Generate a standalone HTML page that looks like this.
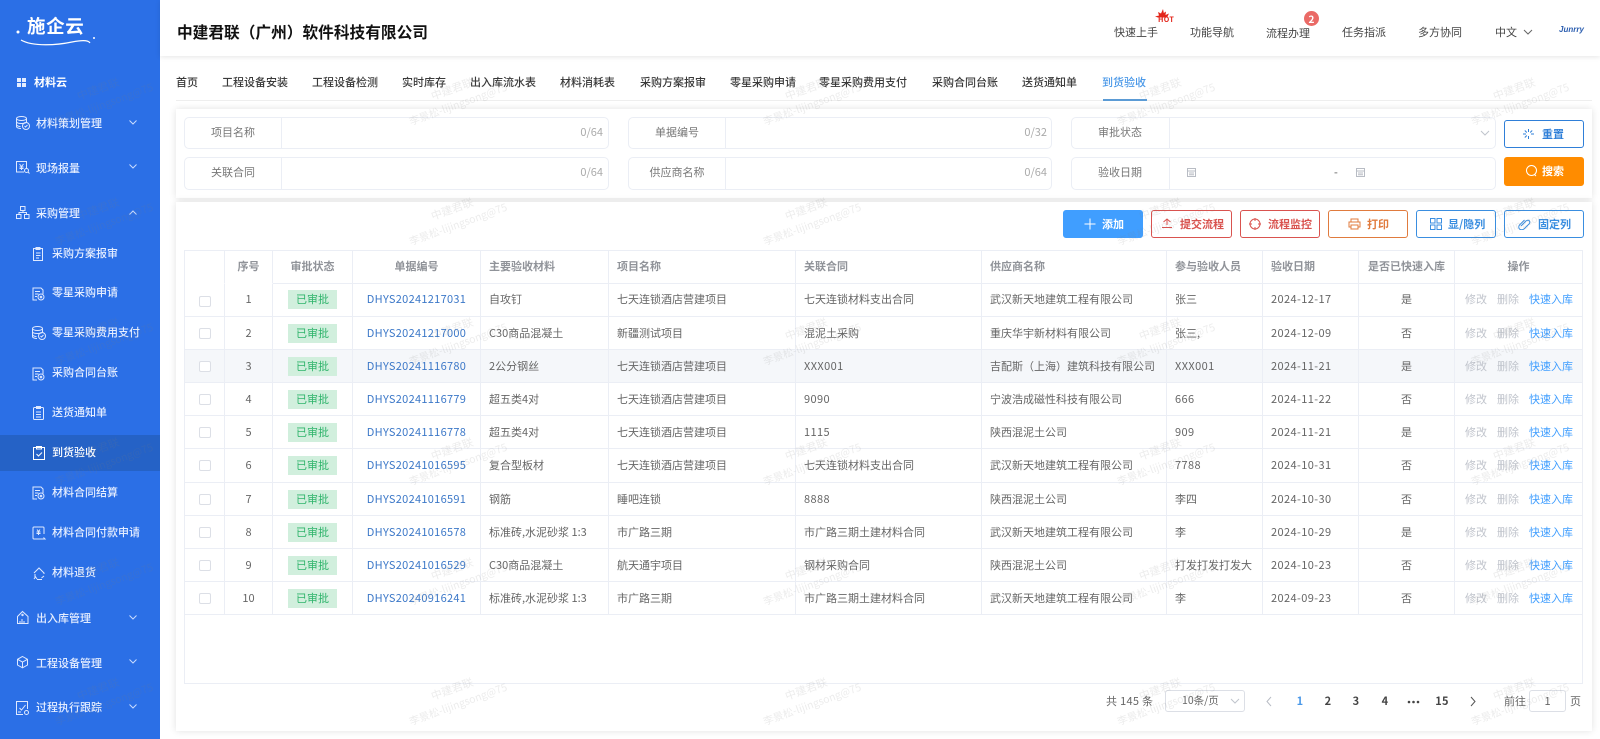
<!DOCTYPE html>
<html lang="zh-CN"><head><meta charset="utf-8"><title>到货验收</title>
<style>
*{box-sizing:border-box}
html,body{margin:0;padding:0;width:1600px;height:739px;overflow:hidden;background:#fff}
body{font-family:"Liberation Sans","Noto Sans CJK SC",sans-serif;font-size:11px;color:#606266;position:relative}
.n,.n *{font-family:"Noto Sans CJK SC","Liberation Sans",sans-serif}
.t{position:absolute;line-height:16px;height:16px;white-space:nowrap}
.c{transform:translateX(-50%)}
#side{position:absolute;left:0;top:0;width:160px;height:739px;background:#2b6fe6}
#side .t{color:#e4edff;font-weight:500}
#act{position:absolute;left:0;top:435px;width:160px;height:36px;background:#2562c6}
#top{position:absolute;left:160px;top:0;width:1440px;height:56px;background:#fff;box-shadow:0 1px 5px rgba(0,0,0,.1)}
.top{color:#444}
.tab{color:#3a3a3a;top:74px;font-weight:500}
.panel{position:absolute;background:#fff;box-shadow:0 0 7px rgba(0,0,0,.12)}
.f{position:absolute;border:1px solid #ebeef5;border-radius:5px;background:#fff}
.d{position:absolute;width:1px;background:#ebeef5}
.lab{color:#777}
.cnt{color:#aaa}
.b{position:absolute;width:80px;height:28px;border:1px solid;border-radius:3px;background:#fff;font-weight:700;font-size:11px;line-height:27px}
.b span{position:absolute;top:0;white-space:nowrap}
.b svg{position:absolute;fill:none;stroke:currentColor;stroke-width:1}
#tb{position:absolute;left:184px;top:250px;width:1399px;height:434px;border:1px solid #ebeef5;background:#fff}
table{border-collapse:separate;border-spacing:0;table-layout:fixed;width:1398px;position:absolute;left:0;top:0}
td,th{height:33px;padding:8px 0 0 8px;vertical-align:top;border-right:1px solid #ebeef5;border-bottom:1px solid #ebeef5;text-align:left;font-size:11px;font-weight:400;color:#666;white-space:nowrap;overflow:hidden;line-height:16px}
th{font-weight:700;color:#909399;padding-top:7px}
th.m,td.m{text-align:center;padding-left:0}
th.nb{border-bottom-color:transparent}
tr.r1 td{padding-top:7px}
tr.r1 .ck{top:5px}
tr.r6 td{height:34px}
tr.h td{background:#f5f7fa}
.ck{display:inline-block;width:12px;height:11px;border:1px solid #dcdfe6;border-radius:2px;background:#fff;position:relative;top:3px;vertical-align:top}
.tag{display:inline-block;width:49px;height:19px;line-height:19px;background:#d1efdd;color:#2fb46b;text-align:center;position:relative;top:-1px;vertical-align:top}
.lnk{color:#3c78c8;letter-spacing:.3px}
.num{letter-spacing:.4px}
.g{color:#c0c4cc;position:absolute;left:10px}
.g2{color:#c0c4cc;position:absolute;left:42px}
.q{color:#409eff;position:absolute;left:74px}
td.o{position:relative;padding:0}
td.o span{top:8px}
tr.r1 td.o{padding:0}
tr.r1 td.o span{top:7px}
.pg{color:#444;font-weight:700;top:693px;letter-spacing:.2px}
#wm{position:absolute;left:0;top:0;width:1600px;height:739px;pointer-events:none}
#wm text{font-size:11px;fill:#808080;fill-opacity:.15;text-anchor:middle;font-family:"Noto Sans CJK SC","Liberation Sans",sans-serif}
#wm text.l{font-size:10.4px}
</style></head><body class="n">

<div id="side">
<div id="act"></div>
<svg width="160" height="739" style="position:absolute;left:0;top:0" fill="none" stroke="#dfe9ff" stroke-width="1">
<defs>
<symbol id="db" viewBox="0 0 14 14" overflow="visible"><ellipse cx="5.5" cy="2.5" rx="5" ry="2"/><path d="M.5 2.500v8c0 1.200 2 2 4.500 2M.5 5.500c0 1.200 2 2 5 2s5-.8 5-2v1M.5 8.500c0 1.200 2 2 4 2M10.500 2.500v3"/><circle cx="10" cy="10" r="3.500"/><path d="M8.500 10l1 1 2-2"/></symbol>
<symbol id="dc" viewBox="0 0 14 14" overflow="visible"><path d="M5 13H1V1h8l2 2v4M3 4.500h5M3 7h3.500M3 9.500h2"/><circle cx="9" cy="10" r="3"/><circle cx="9" cy="10" r=".8"/></symbol>
</defs>
<g fill="#e4edff" stroke="none"><rect x="17" y="78" width="4" height="4"/><rect x="22" y="78" width="4" height="4"/><rect x="17" y="83" width="4" height="4"/><rect x="22" y="83" width="4" height="4"/></g>
<use href="#db" x="16" y="116" width="14" height="14"/>
<g transform="translate(16,161)"><path d="M8 11H.5V.5h10V8M3.500 3l2 2.500 2-2.500M5.500 5.500V9M3.500 6h4M3.500 7.500h4"/><circle cx="10.500" cy="9.500" r="2"/><path d="M12 11l1.500 1.500"/></g>
<g transform="translate(16,206)"><rect x="4.500" y=".5" width="4.500" height="4" /><rect x=".5" y="8.500" width="4.500" height="4"/><rect x="8.500" y="8.500" width="4.500" height="4"/><path d="M7 4.500v2M3 8.500v-2h7.500v2"/></g>
<g transform="translate(32,247)"><path d="M1.500 1.500h9v12h-9zM4 .5h4v2H4zM4 6h4.500M4 8.500h4.500M4 11h3"/></g>
<use href="#dc" x="32" y="287" width="14" height="14"/>
<use href="#db" x="32" y="326" width="14" height="14"/>
<use href="#dc" x="32" y="367" width="14" height="14"/>
<g transform="translate(33,406)"><rect x=".5" y="1.500" width="10" height="12" rx="1"/><path d="M3.500 .5h4v2h-4zM3 6h5M3 8.500h5M3 11h5"/></g>
<g transform="translate(33,446)" stroke="#fff"><rect x=".5" y="1.500" width="11" height="12"/><path d="M3.500 .5h5v2.500h-5zM3.500 8l2 2 3.500-3.500"/></g>
<use href="#dc" x="32" y="486" width="14" height="14"/>
<g transform="translate(32,526)"><path d="M12 8V2a1 1 0 0 0-1-1H2a1 1 0 0 0-1 1v10a1 1 0 0 0 1 1h7M5 3.500l1.500 2 1.500-2M6.500 5.500V9M4.500 6h4M4.500 7.500h4M9 13h4l-1.500-1.500"/></g>
<g transform="translate(33,567)"><path d="M1 6l5-5 5 5v1M2 7v3M1 12l1.500-2.200L4 12M4 12.500h5M8.500 11l2.500-2"/></g>
<g transform="translate(17,611)"><path d="M.5 5.500L5.500.5l5.500 5v7H.5zM2 12.500h7.500M3 10v2M5 8v4M7 10v2"/><circle cx="5.500" cy="4" r=".7"/></g>
<g transform="translate(17,656)"><path d="M5.500 .5l5 2.800v5.700l-5 2.800-5-2.800V3.300zM.5 3.300l5 2.800 5-2.800M5.500 6.100v5.700"/></g>
<g transform="translate(16,701)"><path d="M10 .5H.5v13H7M10 .5h1.500V8M2 11h3M3.500 7l2 2 4-5"/><circle cx="10.500" cy="11.500" r="2"/></g>
<g stroke="#c9dcff"><path d="M129.500 120.500l3.500 3.500 3.500-3.500M129.500 164.500l3.500 3.500 3.500-3.500M129.500 214.500l3.500-3.500 3.500 3.500M129.500 615.500l3.500 3.500 3.500-3.500M129.500 659.500l3.500 3.500 3.500-3.500M129.500 704.500l3.500 3.500 3.500-3.500"/></g>
<path d="M21 40C33 47 58 45 72 42C80 40.500 88 39.500 90 43" stroke="#fff" stroke-width="1.200"/>
<circle cx="18" cy="32" r="1.500" fill="#fff" stroke="none"/><circle cx="94" cy="38" r="1" fill="#fff" stroke="none"/>
</svg>
<div class="t" style="left:27px;top:13px;font-size:18.500px;letter-spacing:.6px;line-height:26px;height:26px;color:#fff;font-weight:700">施企云</div>
<div class="t" style="left:34px;top:74px;font-weight:700;color:#fff">材料云</div>
<div class="t" style="left:36px;top:115px">材料策划管理</div>
<div class="t" style="left:36px;top:160px">现场报量</div>
<div class="t" style="left:36px;top:205px">采购管理</div>
<div class="t" style="left:52px;top:245px">采购方案报审</div>
<div class="t" style="left:52px;top:284px">零星采购申请</div>
<div class="t" style="left:52px;top:324px">零星采购费用支付</div>
<div class="t" style="left:52px;top:364px">采购合同台账</div>
<div class="t" style="left:52px;top:404px">送货通知单</div>
<div class="t" style="left:52px;top:444px;color:#fff">到货验收</div>
<div class="t" style="left:52px;top:484px">材料合同结算</div>
<div class="t" style="left:52px;top:524px">材料合同付款申请</div>
<div class="t" style="left:52px;top:564px">材料退货</div>
<div class="t" style="left:36px;top:610px">出入库管理</div>
<div class="t" style="left:36px;top:655px">工程设备管理</div>
<div class="t" style="left:36px;top:699px">过程执行跟踪</div>
</div>

<div id="top"></div>
<div class="t" style="left:177px;top:21px;height:22px;line-height:22px;font-size:15.7px;font-weight:700;color:#111">中建君联（广州）软件科技有限公司</div>
<div class="t top" style="left:1114px;top:24px">快速上手</div>
<div class="t top" style="left:1190px;top:24px">功能导航</div>
<div class="t top" style="left:1266px;top:25px">流程办理</div>
<div class="t top" style="left:1342px;top:24px">任务指派</div>
<div class="t top" style="left:1418px;top:24px">多方协同</div>
<div class="t top" style="left:1495px;top:24px">中文</div>
<svg style="position:absolute;left:1154px;top:9px" width="20" height="10"><path d="M9 0l.8 4L12 2.500 11.500 6 15 4.500 13 8.500H4L1 7.500l4-1L4 3l3 1.500z" fill="#e3261b"/></svg>
<div class="t" style="left:1158px;top:16px;height:8px;line-height:8px;font-size:7.200px;letter-spacing:.3px;font-weight:700;color:#e3261b">HOT</div>
<div style="position:absolute;left:1304px;top:11px;width:15px;height:15px;border-radius:50%;background:#ea6a66;color:#fff;font-size:10px;font-weight:700;line-height:15px;text-align:center">2</div>
<svg style="position:absolute;left:1523px;top:29px" width="10" height="7" fill="none" stroke="#666"><path d="M1 1l4 4 4-4"/></svg>
<div class="t" style="left:1559px;top:23px;font:italic 700 8px/14px 'Liberation Sans',sans-serif;color:#2d5fb0;height:14px">Junrry</div>

<div class="t tab" style="left:176px">首页</div>
<div class="t tab" style="left:222px">工程设备安装</div>
<div class="t tab" style="left:312px">工程设备检测</div>
<div class="t tab" style="left:402px">实时库存</div>
<div class="t tab" style="left:470px">出入库流水表</div>
<div class="t tab" style="left:560px">材料消耗表</div>
<div class="t tab" style="left:640px">采购方案报审</div>
<div class="t tab" style="left:730px">零星采购申请</div>
<div class="t tab" style="left:819px">零星采购费用支付</div>
<div class="t tab" style="left:932px">采购合同台账</div>
<div class="t tab" style="left:1022px">送货通知单</div>
<div class="t tab" style="left:1102px;color:#4a98e8">到货验收</div>
<div style="position:absolute;left:176px;top:100px;width:1416px;height:1px;background:#eee"></div>
<div style="position:absolute;left:1103px;top:99px;width:44px;height:2px;background:#5b9bd5"></div>

<div class="panel" style="left:176px;top:109px;width:1416px;height:89px"></div>
<div class="panel" style="left:176px;top:202px;width:1416px;height:529px"></div>

<div class="f" style="left:184px;top:117px;width:425px;height:32px"></div><div class="d" style="left:281px;top:118px;height:30px"></div>
<div class="f" style="left:184px;top:157px;width:425px;height:33px"></div><div class="d" style="left:281px;top:158px;height:31px"></div>
<div class="f" style="left:628px;top:117px;width:424px;height:32px"></div><div class="d" style="left:725px;top:118px;height:30px"></div>
<div class="f" style="left:628px;top:157px;width:424px;height:33px"></div><div class="d" style="left:725px;top:158px;height:31px"></div>
<div class="f" style="left:1071px;top:117px;width:425px;height:32px"></div><div class="d" style="left:1169px;top:118px;height:30px"></div>
<div class="f" style="left:1071px;top:157px;width:425px;height:33px"></div><div class="d" style="left:1169px;top:158px;height:31px"></div>
<div class="t lab c" style="left:233px;top:124px">项目名称</div>
<div class="t lab c" style="left:233px;top:164px">关联合同</div>
<div class="t lab c" style="left:677px;top:124px">单据编号</div>
<div class="t lab c" style="left:677px;top:164px">供应商名称</div>
<div class="t lab c" style="left:1120px;top:124px">审批状态</div>
<div class="t lab c" style="left:1120px;top:164px">验收日期</div>
<div class="t cnt" style="right:997px;top:124px">0/64</div>
<div class="t cnt" style="right:997px;top:164px">0/64</div>
<div class="t cnt" style="right:553px;top:124px">0/32</div>
<div class="t cnt" style="right:553px;top:164px">0/64</div>
<svg style="position:absolute;left:1480px;top:130px" width="10" height="7" fill="none" stroke="#c0c4cc"><path d="M1 1l4 4 4-4"/></svg>
<svg style="position:absolute;left:1187px;top:167px" width="180" height="11" fill="none" stroke="#b8bcc4"><path d="M.5 1.500h8v8h-8zM.5 4h8M2 6h5M2 7.800h5M169.500 1.500h8v8h-8zM169.500 4h8M171 6h5M171 7.800h5"/></svg>
<div class="t" style="left:1334px;top:164px;color:#555">-</div>

<div class="b" style="left:1504px;top:120px;border-color:#2f7fd8;color:#2f7fd8"><svg style="left:17px;top:7px" width="13" height="12"><path d="M6.500 1v3M6.500 8v3M1 6h3M9 6h3M2.800 2.500l2 2M10.200 2.500l-2 2M2.800 9.500l2-2"/></svg><span style="left:37px">重置</span></div>
<div class="b" style="left:1504px;top:157px;height:29px;background:#ff8c00;border-color:#ff8c00;color:#fff"><svg style="left:20px;top:6px" width="14" height="14"><circle cx="6.500" cy="6.500" r="5"/><path d="M9.500 10.500l1.500 1.500"/></svg><span style="left:37px">搜索</span></div>
<div class="b" style="left:1063px;top:210px;background:#409eff;border-color:#409eff;color:#fff"><svg style="left:20px;top:7px" width="12" height="12"><path d="M6 .5v11M.5 6h11"/></svg><span style="left:38px">添加</span></div>
<div class="b" style="left:1151px;top:210px;width:81px;border-color:#d9534f;color:#d9534f"><svg style="left:9px;top:7px" width="12" height="12"><path d="M6 7V1M2.500 4L6 1l3.500 3M1 9.500h10"/></svg><span style="left:28px">提交流程</span></div>
<div class="b" style="left:1240px;top:210px;width:80px;border-color:#d9534f;color:#d9534f"><svg style="left:8px;top:7px" width="12" height="12"><circle cx="6" cy="6" r="5"/><path d="M6 0v3M6 9v3M0 6h3M9 6h3"/></svg><span style="left:27px">流程监控</span></div>
<div class="b" style="left:1328px;top:210px;border-color:#e07b3e;color:#e07b3e"><svg style="left:19px;top:7px" width="13" height="12"><path d="M3 4V1h7v3M3 9H1V4h11v5h-2M3 7h7v4H3z"/></svg><span style="left:38px">打印</span></div>
<div class="b" style="left:1416px;top:210px;border-color:#3a8ee0;color:#3a8ee0"><svg style="left:13px;top:7px" width="12" height="12"><rect x=".5" y=".5" width="4.500" height="4.500"/><rect x="7" y=".5" width="4.500" height="4.500"/><rect x=".5" y="7" width="4.500" height="4.500"/><rect x="7" y="7" width="4.500" height="4.500"/></svg><span style="left:31px">显/隐列</span></div>
<div class="b" style="left:1504px;top:210px;border-color:#3a8ee0;color:#3a8ee0"><svg style="left:13px;top:7px" width="13" height="12"><path d="M3 8l5-5c1-1 3-1 3.500 0s.5 2-.5 3L6 11c-1.500 1-3.500 1-4.500 0s-1-3 0-4l5-5"/></svg><span style="left:33px">固定列</span></div>

<div id="tb">
<table>
<colgroup><col style="width:40px"><col style="width:48px"><col style="width:80px"><col style="width:128px"><col style="width:128px"><col style="width:187px"><col style="width:186px"><col style="width:185px"><col style="width:96px"><col style="width:96px"><col style="width:96px"><col style="width:128px"></colgroup>
<tr><th class="nb"></th><th class="m nb">序号</th><th class="m">审批状态</th><th class="m">单据编号</th><th>主要验收材料</th><th>项目名称</th><th>关联合同</th><th>供应商名称</th><th>参与验收人员</th><th>验收日期</th><th class="m">是否已快速入库</th><th class="m">操作</th></tr>
<tr class="r1"><td class="m"><i class="ck"></i></td><td class="m">1</td><td class="m"><span class="tag">已审批</span></td><td class="m lnk">DHYS20241217031</td><td>自攻钉</td><td>七天连锁酒店营建项目</td><td>七天连锁材料支出合同</td><td>武汉新天地建筑工程有限公司</td><td>张三</td><td class="num">2024-12-17</td><td class="m">是</td><td class="o"><span class="g">修改</span><span class="g2">删除</span><span class="q">快速入库</span></td></tr>
<tr><td class="m"><i class="ck"></i></td><td class="m">2</td><td class="m"><span class="tag">已审批</span></td><td class="m lnk">DHYS20241217000</td><td>C30商品混凝土</td><td>新疆测试项目</td><td>混泥土采购</td><td>重庆华宇新材料有限公司</td><td>张三,</td><td class="num">2024-12-09</td><td class="m">否</td><td class="o"><span class="g">修改</span><span class="g2">删除</span><span class="q">快速入库</span></td></tr>
<tr class="h"><td class="m"><i class="ck"></i></td><td class="m">3</td><td class="m"><span class="tag">已审批</span></td><td class="m lnk">DHYS20241116780</td><td>2公分钢丝</td><td>七天连锁酒店营建项目</td><td class="num">XXX001</td><td>吉配斯（上海）建筑科技有限公司</td><td class="num">XXX001</td><td class="num">2024-11-21</td><td class="m">是</td><td class="o"><span class="g">修改</span><span class="g2">删除</span><span class="q">快速入库</span></td></tr>
<tr><td class="m"><i class="ck"></i></td><td class="m">4</td><td class="m"><span class="tag">已审批</span></td><td class="m lnk">DHYS20241116779</td><td>超五类4对</td><td>七天连锁酒店营建项目</td><td class="num">9090</td><td>宁波浩成磁性科技有限公司</td><td class="num">666</td><td class="num">2024-11-22</td><td class="m">否</td><td class="o"><span class="g">修改</span><span class="g2">删除</span><span class="q">快速入库</span></td></tr>
<tr><td class="m"><i class="ck"></i></td><td class="m">5</td><td class="m"><span class="tag">已审批</span></td><td class="m lnk">DHYS20241116778</td><td>超五类4对</td><td>七天连锁酒店营建项目</td><td class="num">1115</td><td>陕西混泥土公司</td><td class="num">909</td><td class="num">2024-11-21</td><td class="m">是</td><td class="o"><span class="g">修改</span><span class="g2">删除</span><span class="q">快速入库</span></td></tr>
<tr class="r6"><td class="m"><i class="ck"></i></td><td class="m">6</td><td class="m"><span class="tag">已审批</span></td><td class="m lnk">DHYS20241016595</td><td>复合型板材</td><td>七天连锁酒店营建项目</td><td>七天连锁材料支出合同</td><td>武汉新天地建筑工程有限公司</td><td class="num">7788</td><td class="num">2024-10-31</td><td class="m">否</td><td class="o"><span class="g">修改</span><span class="g2">删除</span><span class="q">快速入库</span></td></tr>
<tr><td class="m"><i class="ck"></i></td><td class="m">7</td><td class="m"><span class="tag">已审批</span></td><td class="m lnk">DHYS20241016591</td><td>钢筋</td><td>睡吧连锁</td><td class="num">8888</td><td>陕西混泥土公司</td><td>李四</td><td class="num">2024-10-30</td><td class="m">否</td><td class="o"><span class="g">修改</span><span class="g2">删除</span><span class="q">快速入库</span></td></tr>
<tr><td class="m"><i class="ck"></i></td><td class="m">8</td><td class="m"><span class="tag">已审批</span></td><td class="m lnk">DHYS20241016578</td><td>标准砖,水泥砂浆 1:3</td><td>市广路三期</td><td>市广路三期土建材料合同</td><td>武汉新天地建筑工程有限公司</td><td>李</td><td class="num">2024-10-29</td><td class="m">是</td><td class="o"><span class="g">修改</span><span class="g2">删除</span><span class="q">快速入库</span></td></tr>
<tr><td class="m"><i class="ck"></i></td><td class="m">9</td><td class="m"><span class="tag">已审批</span></td><td class="m lnk">DHYS20241016529</td><td>C30商品混凝土</td><td>航天通宇项目</td><td>钢材采购合同</td><td>陕西混泥土公司</td><td>打发打发打发大</td><td class="num">2024-10-23</td><td class="m">否</td><td class="o"><span class="g">修改</span><span class="g2">删除</span><span class="q">快速入库</span></td></tr>
<tr><td class="m"><i class="ck"></i></td><td class="m">10</td><td class="m"><span class="tag">已审批</span></td><td class="m lnk">DHYS20240916241</td><td>标准砖,水泥砂浆 1:3</td><td>市广路三期</td><td>市广路三期土建材料合同</td><td>武汉新天地建筑工程有限公司</td><td>李</td><td class="num">2024-09-23</td><td class="m">否</td><td class="o"><span class="g">修改</span><span class="g2">删除</span><span class="q">快速入库</span></td></tr>
</table>
</div>

<div class="t" style="left:1106px;top:693px;color:#666;letter-spacing:.3px">共 145 条</div>
<div style="position:absolute;left:1165px;top:690px;width:80px;height:22px;border:1px solid #dcdfe6;border-radius:3px"></div>
<div class="t" style="left:1182px;top:693px;font-size:10.500px;color:#666">10条/页</div>
<svg style="position:absolute;left:1230px;top:698px" width="10" height="7" fill="none" stroke="#c0c4cc"><path d="M1 1l4 4 4-4"/></svg>
<svg style="position:absolute;left:1265px;top:696px" width="8" height="11" fill="none" stroke="#b8bcc4"><path d="M6 1L2 5.500 6 10"/></svg>
<div class="t pg c" style="left:1300px;color:#4a98e8">1</div>
<div class="t pg c" style="left:1328px">2</div>
<div class="t pg c" style="left:1356px">3</div>
<div class="t pg c" style="left:1385px">4</div>
<svg style="position:absolute;left:1407px;top:700px" width="13" height="4" fill="#444"><circle cx="2" cy="2" r="1.300"/><circle cx="6.500" cy="2" r="1.300"/><circle cx="11" cy="2" r="1.300"/></svg>
<div class="t pg c" style="left:1442px">15</div>
<svg style="position:absolute;left:1469px;top:696px" width="8" height="11" fill="none" stroke="#555"><path d="M2 1l4 4.500L2 10"/></svg>
<div class="t" style="left:1504px;top:693px;color:#666">前往</div>
<div style="position:absolute;left:1529px;top:690px;width:37px;height:22px;border:1px solid #dcdfe6;border-radius:3px;text-align:center;line-height:20px;color:#666">1</div>
<div class="t" style="left:1570px;top:693px;color:#666">页</div>

<svg id="wm" width="1600" height="739">
<text transform="translate(98,89) rotate(-20)" y="4">中建君联</text><text class="l" transform="translate(104,104) rotate(-20)" y="4">李景松-lijingsong@75</text>
<text transform="translate(452,89) rotate(-20)" y="4">中建君联</text><text class="l" transform="translate(458,104) rotate(-20)" y="4">李景松-lijingsong@75</text>
<text transform="translate(806,89) rotate(-20)" y="4">中建君联</text><text class="l" transform="translate(812,104) rotate(-20)" y="4">李景松-lijingsong@75</text>
<text transform="translate(1160,89) rotate(-20)" y="4">中建君联</text><text class="l" transform="translate(1166,104) rotate(-20)" y="4">李景松-lijingsong@75</text>
<text transform="translate(1514,89) rotate(-20)" y="4">中建君联</text><text class="l" transform="translate(1520,104) rotate(-20)" y="4">李景松-lijingsong@75</text>
<text transform="translate(98,209) rotate(-20)" y="4">中建君联</text><text class="l" transform="translate(104,224) rotate(-20)" y="4">李景松-lijingsong@75</text>
<text transform="translate(452,209) rotate(-20)" y="4">中建君联</text><text class="l" transform="translate(458,224) rotate(-20)" y="4">李景松-lijingsong@75</text>
<text transform="translate(806,209) rotate(-20)" y="4">中建君联</text><text class="l" transform="translate(812,224) rotate(-20)" y="4">李景松-lijingsong@75</text>
<text transform="translate(1160,209) rotate(-20)" y="4">中建君联</text><text class="l" transform="translate(1166,224) rotate(-20)" y="4">李景松-lijingsong@75</text>
<text transform="translate(1514,209) rotate(-20)" y="4">中建君联</text><text class="l" transform="translate(1520,224) rotate(-20)" y="4">李景松-lijingsong@75</text>
<text transform="translate(98,329) rotate(-20)" y="4">中建君联</text><text class="l" transform="translate(104,344) rotate(-20)" y="4">李景松-lijingsong@75</text>
<text transform="translate(452,329) rotate(-20)" y="4">中建君联</text><text class="l" transform="translate(458,344) rotate(-20)" y="4">李景松-lijingsong@75</text>
<text transform="translate(806,329) rotate(-20)" y="4">中建君联</text><text class="l" transform="translate(812,344) rotate(-20)" y="4">李景松-lijingsong@75</text>
<text transform="translate(1160,329) rotate(-20)" y="4">中建君联</text><text class="l" transform="translate(1166,344) rotate(-20)" y="4">李景松-lijingsong@75</text>
<text transform="translate(1514,329) rotate(-20)" y="4">中建君联</text><text class="l" transform="translate(1520,344) rotate(-20)" y="4">李景松-lijingsong@75</text>
<text transform="translate(98,449) rotate(-20)" y="4">中建君联</text><text class="l" transform="translate(104,464) rotate(-20)" y="4">李景松-lijingsong@75</text>
<text transform="translate(452,449) rotate(-20)" y="4">中建君联</text><text class="l" transform="translate(458,464) rotate(-20)" y="4">李景松-lijingsong@75</text>
<text transform="translate(806,449) rotate(-20)" y="4">中建君联</text><text class="l" transform="translate(812,464) rotate(-20)" y="4">李景松-lijingsong@75</text>
<text transform="translate(1160,449) rotate(-20)" y="4">中建君联</text><text class="l" transform="translate(1166,464) rotate(-20)" y="4">李景松-lijingsong@75</text>
<text transform="translate(1514,449) rotate(-20)" y="4">中建君联</text><text class="l" transform="translate(1520,464) rotate(-20)" y="4">李景松-lijingsong@75</text>
<text transform="translate(98,569) rotate(-20)" y="4">中建君联</text><text class="l" transform="translate(104,584) rotate(-20)" y="4">李景松-lijingsong@75</text>
<text transform="translate(452,569) rotate(-20)" y="4">中建君联</text><text class="l" transform="translate(458,584) rotate(-20)" y="4">李景松-lijingsong@75</text>
<text transform="translate(806,569) rotate(-20)" y="4">中建君联</text><text class="l" transform="translate(812,584) rotate(-20)" y="4">李景松-lijingsong@75</text>
<text transform="translate(1160,569) rotate(-20)" y="4">中建君联</text><text class="l" transform="translate(1166,584) rotate(-20)" y="4">李景松-lijingsong@75</text>
<text transform="translate(1514,569) rotate(-20)" y="4">中建君联</text><text class="l" transform="translate(1520,584) rotate(-20)" y="4">李景松-lijingsong@75</text>
<text transform="translate(98,689) rotate(-20)" y="4">中建君联</text><text class="l" transform="translate(104,704) rotate(-20)" y="4">李景松-lijingsong@75</text>
<text transform="translate(452,689) rotate(-20)" y="4">中建君联</text><text class="l" transform="translate(458,704) rotate(-20)" y="4">李景松-lijingsong@75</text>
<text transform="translate(806,689) rotate(-20)" y="4">中建君联</text><text class="l" transform="translate(812,704) rotate(-20)" y="4">李景松-lijingsong@75</text>
<text transform="translate(1160,689) rotate(-20)" y="4">中建君联</text><text class="l" transform="translate(1166,704) rotate(-20)" y="4">李景松-lijingsong@75</text>
<text transform="translate(1514,689) rotate(-20)" y="4">中建君联</text><text class="l" transform="translate(1520,704) rotate(-20)" y="4">李景松-lijingsong@75</text>
</svg>
</body></html>
